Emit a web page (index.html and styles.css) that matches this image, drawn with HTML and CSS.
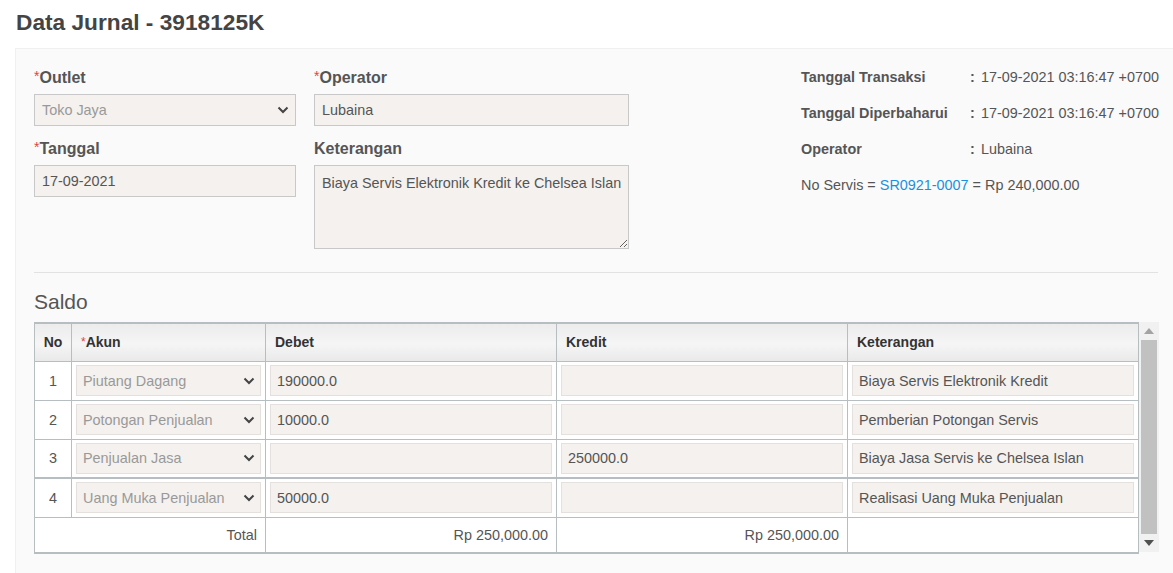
FILE: index.html
```html
<!DOCTYPE html>
<html lang="en">
<head>
  <meta charset="UTF-8">
  <title>Data Jurnal - 3918125K</title>
  <link rel="stylesheet" href="styles.css">
</head>
<body>
  <h1 class="page-title">Data Jurnal - 3918125K</h1>

  <div class="panel">
    <div class="form-top">
      <div class="col col-left">
        <div class="field">
          <label class="label"><span class="req">*</span>Outlet</label>
          <div class="select">
            <span>Toko Jaya</span>
            <svg class="chev" width="12" height="8" viewBox="0 0 12 8"><path d="M1.5 1.5 L6 6 L10.5 1.5" fill="none" stroke="#444" stroke-width="2"/></svg>
          </div>
        </div>
        <div class="field">
          <label class="label"><span class="req">*</span>Tanggal</label>
          <input class="input" type="text" value="17-09-2021">
        </div>
      </div>

      <div class="col col-mid">
        <div class="field">
          <label class="label"><span class="req">*</span>Operator</label>
          <input class="input" type="text" value="Lubaina">
        </div>
        <div class="field">
          <label class="label">Keterangan</label>
          <textarea class="textarea" wrap="off">Biaya Servis Elektronik Kredit ke Chelsea Islan</textarea>
        </div>
      </div>

      <div class="info">
        <div class="info-row"><span class="info-key">Tanggal Transaksi</span><span class="info-colon">:</span><span>17-09-2021 03:16:47 +0700</span></div>
        <div class="info-row"><span class="info-key">Tanggal Diperbaharui</span><span class="info-colon">:</span><span>17-09-2021 03:16:47 +0700</span></div>
        <div class="info-row"><span class="info-key">Operator</span><span class="info-colon">:</span><span>Lubaina</span></div>
        <div class="info-row">No Servis = <a class="link" href="#">SR0921-0007</a> = Rp 240,000.00</div>
      </div>
    </div>

    <hr class="divider">

    <h2 class="section-title">Saldo</h2>

    <div class="grid-wrap">
      <table class="grid">
        <colgroup>
          <col style="width:37px">
          <col style="width:194px">
          <col style="width:291px">
          <col style="width:291px">
          <col>
        </colgroup>
        <thead>
          <tr>
            <th class="c-no">No</th>
            <th><span class="req sm">*</span>Akun</th>
            <th>Debet</th>
            <th>Kredit</th>
            <th>Keterangan</th>
          </tr>
        </thead>
        <tbody>
          <tr>
            <td class="c-no">1</td>
            <td><div class="cell-select"><span>Piutang Dagang</span><svg class="chev" width="12" height="8" viewBox="0 0 12 8"><path d="M1.5 1.5 L6 6 L10.5 1.5" fill="none" stroke="#444" stroke-width="2"/></svg></div></td>
            <td><div class="cell-input">190000.0</div></td>
            <td><div class="cell-input"></div></td>
            <td><div class="cell-input">Biaya Servis Elektronik Kredit</div></td>
          </tr>
          <tr>
            <td class="c-no">2</td>
            <td><div class="cell-select"><span>Potongan Penjualan</span><svg class="chev" width="12" height="8" viewBox="0 0 12 8"><path d="M1.5 1.5 L6 6 L10.5 1.5" fill="none" stroke="#444" stroke-width="2"/></svg></div></td>
            <td><div class="cell-input">10000.0</div></td>
            <td><div class="cell-input"></div></td>
            <td><div class="cell-input">Pemberian Potongan Servis</div></td>
          </tr>
          <tr class="row-split">
            <td class="c-no">3</td>
            <td><div class="cell-select"><span>Penjualan Jasa</span><svg class="chev" width="12" height="8" viewBox="0 0 12 8"><path d="M1.5 1.5 L6 6 L10.5 1.5" fill="none" stroke="#444" stroke-width="2"/></svg></div></td>
            <td><div class="cell-input"></div></td>
            <td><div class="cell-input">250000.0</div></td>
            <td><div class="cell-input">Biaya Jasa Servis ke Chelsea Islan</div></td>
          </tr>
          <tr>
            <td class="c-no">4</td>
            <td><div class="cell-select"><span>Uang Muka Penjualan</span><svg class="chev" width="12" height="8" viewBox="0 0 12 8"><path d="M1.5 1.5 L6 6 L10.5 1.5" fill="none" stroke="#444" stroke-width="2"/></svg></div></td>
            <td><div class="cell-input">50000.0</div></td>
            <td><div class="cell-input"></div></td>
            <td><div class="cell-input">Realisasi Uang Muka Penjualan</div></td>
          </tr>
          <tr class="row-total">
            <td colspan="2" class="num">Total</td>
            <td class="num">Rp 250,000.00</td>
            <td class="num">Rp 250,000.00</td>
            <td></td>
          </tr>
        </tbody>
      </table>

      <div class="scrollbar">
        <div class="sb-arrow"><svg width="10" height="6" viewBox="0 0 10 6"><path d="M0 6 L5 0 L10 6 Z" fill="#a3a3a3"/></svg></div>
        <div class="sb-thumb"></div>
        <div class="sb-arrow"><svg width="10" height="6" viewBox="0 0 10 6"><path d="M0 0 L5 6 L10 0 Z" fill="#505050"/></svg></div>
      </div>
    </div>
  </div>
</body>
</html>
```

FILE: styles.css
```css
html {
  box-sizing: border-box;
}

*, *:before, *:after {
  box-sizing: inherit;
}

body {
  margin: 0;
  font-family: "Liberation Sans", Arial, sans-serif;
  font-size: 14.4px;
  color: #555;
  background: #fff;
  overflow: hidden;
}

.page-title {
  margin: 0;
  padding: 9px 0 0 16px;
  height: 48px;
  font-size: 22.7px;
  font-weight: bold;
  color: #444;
}

.panel {
  margin-left: 15px;
  padding: 16px 15px 20px 18px;
  background: #fafafa;
  border-top: 1px solid #f0f0f0;
  border-left: 1px solid #f0f0f0;
  min-height: 600px;
}

.form-top {
  display: flex;
}

.col-left {
  width: 262px;
  margin-right: 18px;
}

.col-mid {
  width: 315px;
}

.field {
  margin-bottom: 10px;
}

.label {
  display: block;
  padding-top: 1px;
  font-size: 16px;
  font-weight: bold;
  line-height: 24px;
  margin-bottom: 4px;
  color: #555;
}

.req {
  color: #e0453a;
  font-weight: normal;
  font-size: 14px;
  line-height: 0;
  vertical-align: 2px;
}

.req.sm {
  font-size: 12px;
  vertical-align: 1px;
}

.select,
.input,
.textarea {
  display: flex;
  align-items: center;
  width: 100%;
  height: 32px;
  padding: 0 7px;
  border: 1px solid #c8c8c8;
  background: #f4f1ee;
  font-family: inherit;
  font-size: 14.4px;
  color: #555;
  outline: none;
}

.select {
  justify-content: space-between;
  color: #999;
  padding-right: 6px;
}

.textarea {
  display: block;
  height: 84px;
  padding: 8px 0 8px 7px;
  resize: vertical;
  line-height: 18px;
  overflow: hidden;
}

.info {
  margin-left: auto;
  width: 357px;
  padding-top: 3px;
}

.info-row {
  height: 36px;
  line-height: 18px;
  color: #555;
  white-space: nowrap;
}

.info-key {
  display: inline-block;
  width: 169px;
  font-weight: bold;
}

.info-colon {
  display: inline-block;
  width: 11px;
  font-weight: bold;
}

.link {
  color: #1a8fe0;
  text-decoration: none;
}

.divider {
  border: 0;
  border-top: 1px solid #e2e2e2;
  margin: 13px 0 17px;
}

.section-title {
  margin: 0 0 8px;
  font-size: 21px;
  font-weight: normal;
  line-height: 24px;
  color: #555;
}

.grid-wrap {
  display: flex;
  width: 1125px;
}

.grid {
  width: 1105px;
  border-collapse: collapse;
  table-layout: fixed;
  background: #fff;
  border-top: 2px solid #b6bec2;
  border-bottom: 2px solid #b6bec2;
}

.grid th,
.grid td {
  border: 1px solid #b6bec2;
}

.grid th {
  height: 38px;
  padding: 0 9px;
  text-align: left;
  font-size: 14px;
  font-weight: bold;
  color: #333;
  background: linear-gradient(#ececec, #f5f5f5 55%, #e9e9e9);
}

.grid td {
  height: 39px;
  padding: 3px 4px;
}

.grid .c-no {
  text-align: center;
  padding: 0;
}

.row-split td {
  border-bottom: 2px solid #b6bec2;
}

.cell-select,
.cell-input {
  display: flex;
  align-items: center;
  height: 31px;
  padding: 0 6px;
  background: #f4f1ee;
  border: 1px solid #e3e0dd;
  color: #555;
  white-space: nowrap;
  overflow: hidden;
}

.cell-select {
  justify-content: space-between;
  color: #999;
  padding-right: 5px;
}

.row-total td {
  height: 36px;
  padding: 0 8px;
}

.grid .num {
  text-align: right;
}

.scrollbar {
  width: 20px;
  display: flex;
  flex-direction: column;
  background: #f1f1f1;
  height: 230px;
}

.sb-arrow {
  height: 18px;
  display: flex;
  align-items: center;
  justify-content: center;
}

.sb-thumb {
  flex: 1;
  margin: 0 2px;
  background: #c1c1c1;
}
```
